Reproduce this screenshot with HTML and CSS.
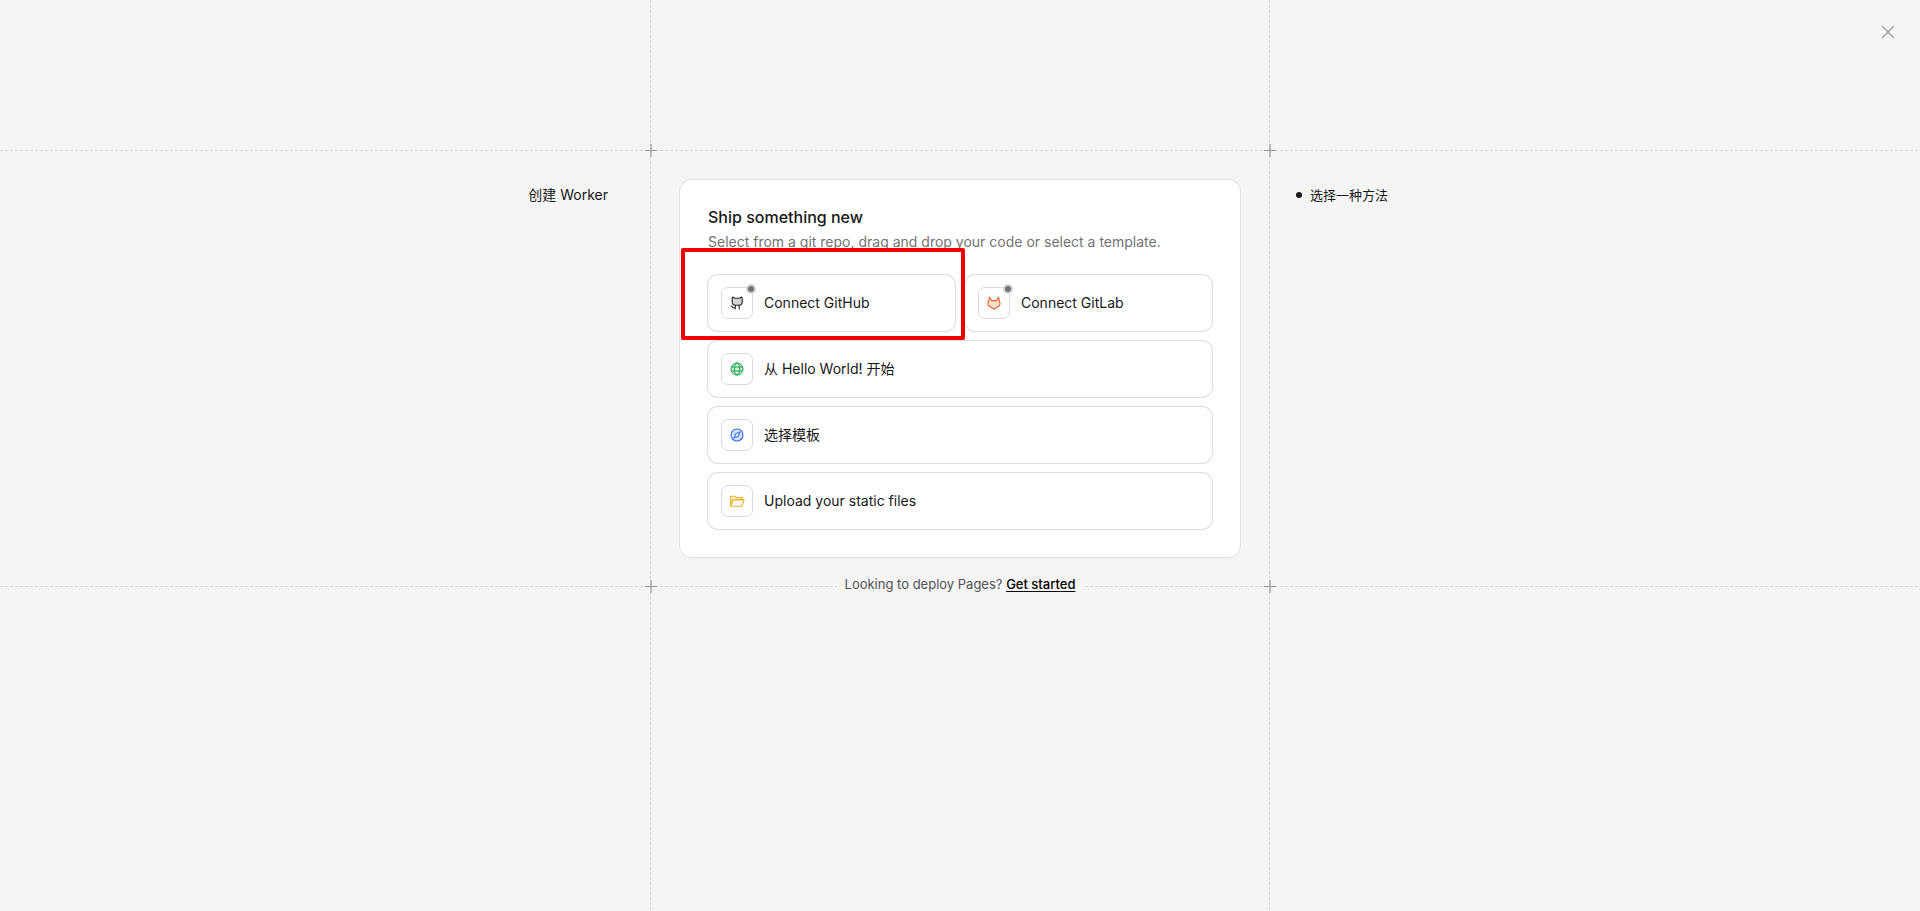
FILE: index.html
```
<!DOCTYPE html>
<html lang="zh-CN">
<head>
  <meta charset="UTF-8" />
  <meta name="viewport" content="width=device-width,initial-scale=1" />
  <title>创建 Worker</title>
  <link rel="stylesheet" href="styles.css">
</head>
<body>

  <div class="page">

    <!-- Top row -->
    <div class="cell line-bottom"></div>
    <div class="cell line-sides line-bottom">
      <span class="cross cross-left"></span>
      <span class="cross cross-right"></span>
    </div>
    <div class="cell line-bottom top-right">
      <button class="close-btn" aria-label="关闭">
        <svg width="14" height="14" viewBox="0 0 14 14" fill="none" stroke="currentColor" stroke-width="1.2"><path d="M1 1l12 12M13 1L1 13"/></svg>
      </button>
    </div>

    <!-- Main row -->
    <div class="cell line-bottom side-left">
      <h1 class="page-title">创建 Worker</h1>
    </div>

    <main class="cell line-sides line-bottom middle">
      <section class="card">
        <h2 class="card-title">Ship something new</h2>
        <p class="card-text">Select from a git repo, drag and drop your code or select a template.</p>

        <div class="options">
          <div class="option-row">
            <div class="option-wrap">
              <button class="option">
                <span class="option-icon github">
                  <svg width="14" height="14" viewBox="0 0 14 14" fill="none" stroke="currentColor" stroke-width="1.1" stroke-linejoin="round" stroke-linecap="round">
                    <path d="M2.700 1L5.300 2.200H9.100L11.700 1Q12.500 2.400 12.100 3.700Q13.100 8.800 9.200 9.200H5.200Q1.300 8.800 2.300 3.700Q1.900 2.400 2.700 1Z" fill="#d4d4d4"/>
                    <path d="M5.600 9.200Q5 10.500 5.200 13M8.800 9.200Q9.500 10.500 9.300 13"/>
                    <path d="M5 11.700Q2.900 12 2.400 10.900Q1.900 10 1 10"/>
                  </svg>
                  <span class="status-dot"></span>
                </span>
                Connect GitHub
              </button>
              <span class="highlight"></span>
            </div>
            <div class="option-wrap">
              <button class="option">
                <span class="option-icon gitlab">
                  <svg width="14" height="14" viewBox="0 0 14 14" fill="#ffe0d1" stroke="currentColor" stroke-width="1.2" stroke-linejoin="round">
                    <path d="M2.500 1.200L4.500 4.600H9.500L11.500 1.200L13 7.700Q12.900 9.300 11.700 10.200L7 13L2.300 10.200Q1.100 9.300 1 7.700Z"/>
                  </svg>
                  <span class="status-dot"></span>
                </span>
                Connect GitLab
              </button>
            </div>
          </div>

          <button class="option">
            <span class="option-icon hello">
              <svg width="14" height="14" viewBox="0 0 14 14" fill="none" stroke="currentColor" stroke-width="1">
                <circle cx="7" cy="7" r="6" fill="#d3f3de"/>
                <ellipse cx="7" cy="7" rx="2.700" ry="6"/>
                <path d="M1.400 5H12.600M1.400 9H12.600"/>
              </svg>
            </span>
            从 Hello World! 开始
          </button>

          <button class="option">
            <span class="option-icon template">
              <svg width="14" height="14" viewBox="0 0 14 14" fill="none" stroke="currentColor" stroke-width="1.1" stroke-linejoin="round">
                <circle cx="7" cy="7" r="6" fill="#d5e4fd"/>
                <path d="M10 4L8.300 8.300L4 10L5.700 5.700Z" fill="#fff"/>
              </svg>
            </span>
            选择模板
          </button>

          <button class="option">
            <span class="option-icon upload">
              <svg width="16" height="14" viewBox="0 0 16 14" fill="none" stroke="currentColor" stroke-width="1.1" stroke-linejoin="round">
                <path d="M1.500 12.200V2.200H5.800L7.500 3.600H13.200V5.600H3.900Z" fill="#fff0c7"/>
                <path d="M1.500 12.200L3.900 5.600H15L12.900 12.200Z"/>
              </svg>
            </span>
            Upload your static files
          </button>
        </div>
      </section>
      <p class="pages-note">Looking to deploy Pages? <a class="pages-link" href="#">Get started</a></p>
      <span class="cross cross-left"></span>
      <span class="cross cross-right"></span>
    </main>

    <div class="cell line-bottom side-right">
      <ol class="steps">
        <li class="step">选择一种方法</li>
      </ol>
    </div>

    <!-- Bottom row -->
    <div class="cell"></div>
    <div class="cell line-sides"></div>
    <div class="cell"></div>
  </div>

</body>
</html>
```
FILE: styles.css
```
/* RESET & GLOBAL */
* { margin:0; padding:0; box-sizing:border-box; }
html, body { height:100%; }
body {
  font-family:Inter, "Noto Sans CJK SC", sans-serif;
  font-size:14px; line-height:20px;
  background:#f5f5f5; color:#171717;
}
button { font:inherit; color:inherit; cursor:pointer; }
svg { display:block; }

/* PAGE GRID */
.page {
  display:grid; min-height:100%;
  grid-template-columns:1fr 620px 1fr;
  grid-template-rows:151px auto 1fr;
}
.cell {
  --h:linear-gradient(transparent,transparent);
  --v:linear-gradient(transparent,transparent);
  position:relative;
  background-image:var(--h), var(--v), var(--v);
  background-position:left bottom, left top, right top;
  background-size:100% 1px, 1px 100%, 1px 100%;
  background-repeat:no-repeat;
}
.line-bottom { --h:repeating-linear-gradient(90deg,#d9d9d9 0 3px,transparent 3px 5px); }
.line-sides { --v:repeating-linear-gradient(#d9d9d9 0 3px,transparent 3px 5px); }

/* plus marks where the lines meet */
.cross {
  position:absolute; bottom:-6px; z-index:1; width:12px; height:13px;
  background:
    linear-gradient(#999,#999) center/12px 1px no-repeat,
    linear-gradient(#bbb,#bbb) center/2px 13px no-repeat,
    #f5f5f5;
}
.cross-left { left:-5px; }
.cross-right { right:-6px; }

/* SIDES */
.top-right { display:flex; justify-content:flex-end; align-items:flex-start; padding:24px; }
.close-btn { padding:1px; border:none; background:none; color:#999; }
.side-left { padding:34px 42px 0 24px; text-align:right; }
.side-right { padding:34px 26px 0; }
.page-title { font-size:14px; font-weight:400; }
.steps { list-style:none; }
.step { display:flex; align-items:center; gap:8px; font-size:13px; }
.step::before { content:""; width:6px; height:6px; border-radius:50%; background:#171717; }

/* CARD */
.middle { padding:29px 30px 0; }
.card {
  padding:25px 28px 28px;
  background:#fff; border-radius:12px;
  box-shadow:0 0 0 1px #e2e2e2;
}
.card-title { font-size:16px; line-height:24px; font-weight:500; }
.card-text { color:#737373; line-height:26px; }

/* OPTIONS */
.options { display:flex; flex-direction:column; gap:10px; margin-top:20px; }
.option-row { display:grid; grid-template-columns:1fr 1fr; gap:10px; }
.option-wrap { position:relative; }
.option {
  display:flex; align-items:center; gap:11px;
  width:100%; padding:12px 13px;
  background:#fff; border:none; border-radius:10px;
  box-shadow:0 0 0 1px #dedede;
  text-align:left;
}
.option-icon {
  position:relative; display:flex; align-items:center; justify-content:center;
  width:32px; height:32px;
  border:1px solid #d9d9d9; border-radius:7px;
}
.github { color:#262626; }
.gitlab { color:#e8662f; }
.hello { color:#16a34a; }
.template { color:#3b6ff0; }
.upload { color:#eab32c; }
.status-dot {
  position:absolute; top:-4px; right:-4px;
  width:10px; height:10px; border-radius:50%;
  background:#737373; border:2px solid #d4d4d4;
}
.highlight {
  position:absolute; inset:-27px -10px -9px -27px;
  border:4px solid #f00000; border-radius:2px;
  pointer-events:none; z-index:1;
}

/* FOOT NOTE */
.pages-note {
  position:relative;
  width:fit-content; margin:17px auto -7px; padding:0 8px;
  background:#f5f5f5; color:#525252; font-size:13px; line-height:20px;
}
.pages-link {
  color:#000; font-weight:500;
  text-decoration:underline 1px; text-underline-offset:2px;
  text-decoration-skip-ink:none;
}
```
